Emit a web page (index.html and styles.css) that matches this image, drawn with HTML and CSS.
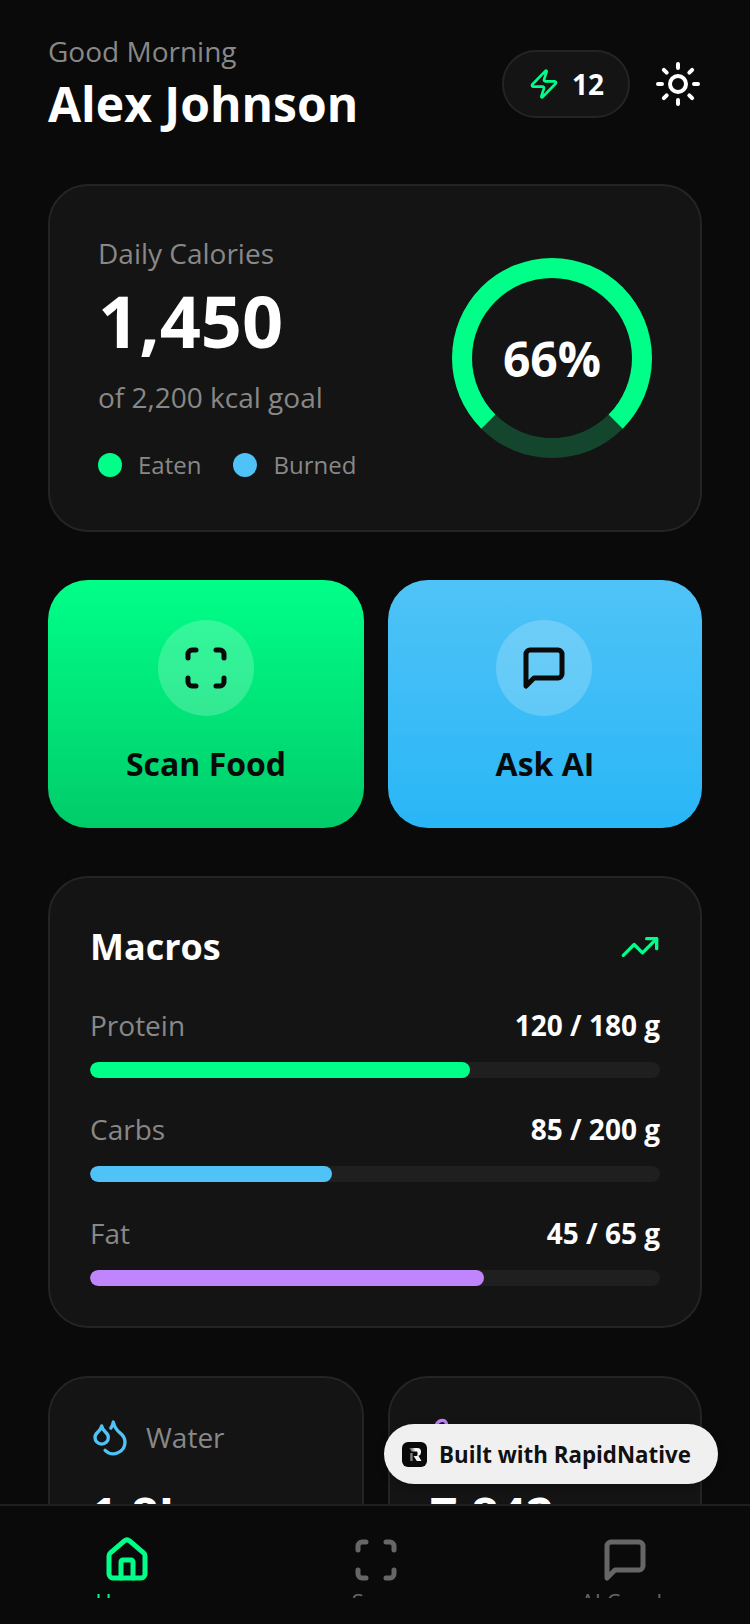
FILE: index.html
```html
<!DOCTYPE html>
<html lang="en">
<head>
<meta charset="utf-8">
<title>Dashboard</title>
<link rel="stylesheet" href="styles.css">
</head>
<body>
<div class="app">
  <main class="scroll">
    <header class="header">
      <div>
        <div class="greeting">Good Morning</div>
        <div class="name">Alex Johnson</div>
      </div>
      <div class="header-actions">
        <div class="streak">
          <svg class="ic32" viewBox="0 0 24 24" fill="none" stroke="#00ff88" stroke-width="2" stroke-linecap="round" stroke-linejoin="round"><path d="M4 14a1 1 0 0 1-.78-1.63l9.9-10.2a.5.5 0 0 1 .86.46l-1.92 6.02A1 1 0 0 0 13 10h7a1 1 0 0 1 .78 1.63l-9.9 10.2a.5.5 0 0 1-.86-.46l1.92-6.02A1 1 0 0 0 11 14z"/></svg>
          <span class="streak-num">12</span>
        </div>
        <svg class="ic48" viewBox="0 0 24 24" fill="none" stroke="#fff" stroke-width="2" stroke-linecap="round" stroke-linejoin="round"><circle cx="12" cy="12" r="4"/><path d="M12 2v2M12 20v2M4.93 4.93l1.41 1.41M17.66 17.66l1.41 1.41M2 12h2M20 12h2M6.34 17.66l-1.41 1.41M19.07 4.93l-1.41 1.41"/></svg>
      </div>
    </header>

    <section class="card calories">
      <div>
        <div class="cal-label">Daily Calories</div>
        <div class="cal-value">1,450</div>
        <div class="cal-goal">of 2,200 kcal goal</div>
        <div class="legend">
          <span class="dot dot-green"></span><span class="legend-text">Eaten</span>
          <span class="dot dot-blue"></span><span class="legend-text">Burned</span>
        </div>
      </div>
      <div class="ring"><span class="ring-text">66%</span></div>
    </section>

    <section class="actions">
      <div class="action action-green">
        <div class="action-icon">
          <svg class="ic48" viewBox="0 0 24 24" fill="none" stroke="#0a0a0a" stroke-width="2.5" stroke-linecap="round" stroke-linejoin="round"><path d="M3 7V5a2 2 0 0 1 2-2h2M17 3h2a2 2 0 0 1 2 2v2M21 17v2a2 2 0 0 1-2 2h-2M7 21H5a2 2 0 0 1-2-2v-2"/></svg>
        </div>
        <div class="action-text">Scan Food</div>
      </div>
      <div class="action action-blue">
        <div class="action-icon">
          <svg class="ic48" viewBox="0 0 24 24" fill="none" stroke="#0a0a0a" stroke-width="2.5" stroke-linecap="round" stroke-linejoin="round"><path d="M21 15a2 2 0 0 1-2 2H7l-4 4V5a2 2 0 0 1 2-2h14a2 2 0 0 1 2 2z"/></svg>
        </div>
        <div class="action-text">Ask AI</div>
      </div>
    </section>

    <section class="card macros">
      <div class="macros-head">
        <div class="macros-title">Macros</div>
        <svg class="ic40" viewBox="0 0 24 24" fill="none" stroke="#00ff88" stroke-width="2" stroke-linecap="round" stroke-linejoin="round"><path d="M22 7l-8.5 8.5-5-5L2 17"/><path d="M16 7h6v6"/></svg>
      </div>
      <div class="macro">
        <div class="macro-row"><span class="macro-name">Protein</span><span class="macro-val">120 / 180 g</span></div>
        <div class="track"><div class="fill fill-green" style="width:66.7%"></div></div>
      </div>
      <div class="macro">
        <div class="macro-row"><span class="macro-name">Carbs</span><span class="macro-val">85 / 200 g</span></div>
        <div class="track"><div class="fill fill-blue" style="width:42.5%"></div></div>
      </div>
      <div class="macro">
        <div class="macro-row"><span class="macro-name">Fat</span><span class="macro-val">45 / 65 g</span></div>
        <div class="track"><div class="fill fill-purple" style="width:69.2%"></div></div>
      </div>
    </section>

    <section class="stats">
      <div class="card stat">
        <div class="stat-head">
          <svg class="ic40" viewBox="0 0 24 24" fill="none" stroke="#4fc3f7" stroke-width="2" stroke-linecap="round" stroke-linejoin="round"><path d="M7 16.3c2.2 0 4-1.83 4-4.05 0-1.16-.57-2.26-1.71-3.19S7.29 6.75 7 5.3c-.29 1.45-1.14 2.84-2.29 3.76S3 11.1 3 12.25c0 2.22 1.8 4.05 4 4.05z"/><path d="M12.56 6.6A10.97 10.97 0 0 0 14 3.02c.5 2.5 2 4.9 4 6.5s3 3.5 3 5.5a6.98 6.98 0 0 1-11.91 4.97"/></svg>
          <span class="stat-label">Water</span>
        </div>
        <div class="stat-value">1.8L</div>
      </div>
      <div class="card stat">
        <div class="stat-head">
          <svg class="ic40" viewBox="0 0 24 24" fill="none" stroke="#c084fc" stroke-width="2" stroke-linecap="round" stroke-linejoin="round"><path d="M4 16v-2.38C4 11.5 2.97 10.5 3 8c.03-2.72 1.49-6 4.5-6C9.37 2 10 3.8 10 5.5c0 3.11-2 5.66-2 8.68V16a2 2 0 1 1-4 0z"/><path d="M20 20v-2.38c0-2.12 1.03-3.12 1-5.62-.03-2.72-1.49-6-4.5-6C14.63 6 14 7.8 14 9.5c0 3.11 2 5.66 2 8.68V20a2 2 0 1 0 4 0z"/><path d="M16 17h4M4 13h4"/></svg>
          <span class="stat-label">Steps</span>
        </div>
        <div class="stat-value">7,842</div>
      </div>
    </section>
  </main>

  <nav class="tabbar">
    <div class="tab">
      <svg class="ic48" viewBox="0 0 24 24" fill="none" stroke="#00ff88" stroke-width="2.5" stroke-linecap="round" stroke-linejoin="round"><path d="M15 21v-8a1 1 0 0 0-1-1h-4a1 1 0 0 0-1 1v8"/><path d="M3 10a2 2 0 0 1 .71-1.53l7-6a2 2 0 0 1 2.58 0l7 6A2 2 0 0 1 21 10v9a2 2 0 0 1-2 2H5a2 2 0 0 1-2-2z"/></svg>
      <span class="tab-label tab-on">Home</span>
    </div>
    <div class="tab">
      <svg class="ic48" viewBox="0 0 24 24" fill="none" stroke="#666" stroke-width="2.5" stroke-linecap="round" stroke-linejoin="round"><path d="M3 7V5a2 2 0 0 1 2-2h2M17 3h2a2 2 0 0 1 2 2v2M21 17v2a2 2 0 0 1-2 2h-2M7 21H5a2 2 0 0 1-2-2v-2"/></svg>
      <span class="tab-label">Scan</span>
    </div>
    <div class="tab">
      <svg class="ic48" viewBox="0 0 24 24" fill="none" stroke="#666" stroke-width="2.5" stroke-linecap="round" stroke-linejoin="round"><path d="M21 15a2 2 0 0 1-2 2H7l-4 4V5a2 2 0 0 1 2-2h14a2 2 0 0 1 2 2z"/></svg>
      <span class="tab-label">AI Coach</span>
    </div>
  </nav>

  <div class="badge">
    <span class="badge-logo">
      <svg viewBox="0 0 25 25" width="25" height="25">
        <defs><linearGradient id="logoFade" x1="0" x2="1" y1="0" y2="0"><stop offset="0" stop-color="#333"/><stop offset="0.5" stop-color="#f4f4f4"/></linearGradient></defs>
        <path d="M7 6h8.5a3.5 3.5 0 0 1 3.5 3.5v1a3.5 3.5 0 0 1-2.6 3.3L19.5 19h-4.6l-3.4-5H14.5a1 1 0 0 0 1-1v-2.5a1 1 0 0 0-1-1H9.5z M8 11h2.5v8H8z" fill="url(#logoFade)"/>
      </svg>
    </span>
    <span class="badge-text">Built with RapidNative</span>
  </div>
</div>
</body>
</html>
```

FILE: styles.css
```css
* { box-sizing: border-box; }
html, body { margin: 0; padding: 0; background: #0a0a0a; }
body { font-family: "Open Sans", "Liberation Sans", sans-serif; color: #fff; }
svg { display: block; flex: none; }
.ic32 { width: 32px; height: 32px; }
.ic40 { width: 40px; height: 40px; }
.ic48 { width: 48px; height: 48px; }

.app { position: relative; width: 750px; height: 1624px; overflow: hidden; display: flex; flex-direction: column; background: #0a0a0a; }
.scroll { height: 1504px; flex: none; overflow: hidden; padding: 32px 48px 0; }

.header { display: flex; justify-content: space-between; align-items: center; height: 104px; margin-bottom: 48px; }
.greeting { font-size: 28px; line-height: 38px; margin-bottom: 2px; color: #888; }
.name { font-size: 48px; line-height: 64px; font-weight: 700; }
.header-actions { display: flex; align-items: center; gap: 24px; }
.streak { display: flex; align-items: center; gap: 12px; height: 68px; padding: 0 24px; border-radius: 34px; background: #141414; border: 2px solid #242424; }
.streak-num { font-size: 28px; font-weight: 700; }

.card { background: #141414; border: 2px solid #242424; border-radius: 40px; }
.calories { height: 348px; display: flex; justify-content: space-between; align-items: center; padding: 0 48px; }
.cal-label { font-size: 28px; line-height: 40px; color: #888; }
.cal-value { font-size: 72px; line-height: 88px; font-weight: 700; margin-top: 3px; }
.cal-goal { font-size: 28px; line-height: 40px; color: #888; margin-top: 13px; }
.legend { display: flex; align-items: center; margin-top: 30px; }
.dot { width: 24px; height: 24px; border-radius: 50%; margin-right: 16px; }
.dot-green { background: #00ff88; }
.dot-blue { background: #4fc3f7; }
.legend-text { font-size: 24px; line-height: 36px; color: #888; margin-right: 32px; }
.ring { width: 200px; height: 200px; border-radius: 50%; border: 20px solid #00ff88; border-bottom-color: #14462d; display: flex; align-items: center; justify-content: center; }
.ring-text { font-size: 48px; font-weight: 700; }

.actions { display: grid; grid-template-columns: 316px 314px; gap: 24px; margin-top: 48px; }
.action { height: 248px; border-radius: 40px; display: flex; flex-direction: column; align-items: center; padding-top: 40px; }
.action-green { background: linear-gradient(180deg, #00ff88, #00cc6a); }
.action-blue { background: linear-gradient(180deg, #4fc3f7, #29b6f6); }
.action-icon { width: 96px; height: 96px; border-radius: 50%; background: rgba(255,255,255,0.2); display: flex; align-items: center; justify-content: center; }
.action-blue .action-icon { margin-right: 2px; }
.action-text { font-size: 32px; line-height: 44px; font-weight: 700; color: #0a0a0a; margin-top: 26px; }

.macros { margin-top: 48px; height: 452px; padding: 41px 40px 0; }
.macros-head { display: flex; justify-content: space-between; align-items: center; height: 56px; margin-bottom: 30px; }
.macros-title { font-size: 36px; line-height: 56px; font-weight: 700; }
.macro { margin-bottom: 31px; }
.macro-row { display: flex; justify-content: space-between; align-items: center; height: 40px; margin-bottom: 17px; }
.macro-name { font-size: 28px; color: #888; }
.macro-val { font-size: 28px; font-weight: 700; }
.track { height: 16px; border-radius: 8px; background: #1f1f1f; overflow: hidden; }
.fill { height: 100%; border-radius: 8px; }
.fill-green { background: #00ff88; }
.fill-blue { background: #4fc3f7; }
.fill-purple { background: #c084fc; }

.stats { display: grid; grid-template-columns: 316px 314px; gap: 24px; margin-top: 48px; }
.stat { height: 240px; padding: 39px 40px 0; }
.stat-head { display: flex; align-items: center; gap: 16px; height: 40px; }
.stat-label { font-size: 28px; color: #888; }
.stat-value { font-size: 48px; line-height: 64px; font-weight: 700; margin-top: 26px; }

.tabbar { flex: none; height: 120px; background: #0a0a0a; border-top: 2px solid #1f1f1f; display: flex; padding: 30px 0 0 2px; }
.tab { flex: 1; height: 62px; overflow: hidden; display: flex; flex-direction: column; align-items: center; }
.tab-label { font-size: 22px; line-height: 28px; color: #666; margin-top: 3px; font-weight: 500; }
.tab-on { color: #00ff88; }

.badge { position: absolute; left: 384px; top: 1424px; width: 334px; height: 60px; border-radius: 30px; background: #f0f0f0; display: flex; align-items: center; gap: 12px; padding-left: 18px; box-shadow: 0 2px 8px rgba(0,0,0,0.3); }
.badge-logo { width: 25px; height: 25px; border-radius: 6px; background: #0a0a0a; display: block; overflow: hidden; }
.badge-text { font-size: 22.3px; font-weight: 700; color: #111; white-space: nowrap; }
```
